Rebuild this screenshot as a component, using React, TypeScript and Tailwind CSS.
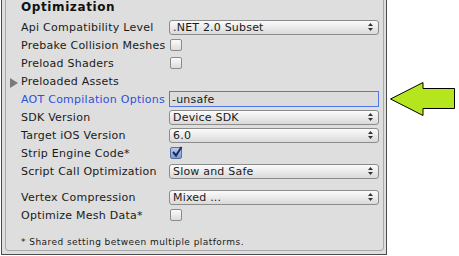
import React from "react"

type Row =
  | { kind: "popup"; label: string; value: string }
  | { kind: "check"; label: string; checked?: boolean }
  | { kind: "fold"; label: string }
  | { kind: "text"; label: string; value: string }

const rows: Row[] = [
  { kind: "popup", label: "Api Compatibility Level", value: ".NET 2.0 Subset" },
  { kind: "check", label: "Prebake Collision Meshes" },
  { kind: "check", label: "Preload Shaders" },
  { kind: "fold", label: "Preloaded Assets" },
  { kind: "text", label: "AOT Compilation Options", value: "-unsafe" },
  { kind: "popup", label: "SDK Version", value: "Device SDK" },
  { kind: "popup", label: "Target iOS Version", value: "6.0" },
  { kind: "check", label: "Strip Engine Code*", checked: true },
  { kind: "popup", label: "Script Call Optimization", value: "Slow and Safe" },
]

const rows2: Row[] = [
  { kind: "popup", label: "Vertex Compression", value: "Mixed ..." },
  { kind: "check", label: "Optimize Mesh Data*" },
]

function Popup({ value }: { value: string }) {
  return (
    <div className="flex h-[15px] w-[210px] items-center justify-between rounded-[3px] border border-[#8c8c8c] bg-gradient-to-b from-[#fbfbfb] to-[#dadada] pl-[3px] pr-[5px] text-[11px] leading-none tracking-[0.2px] text-[#1a1a1a]">
      <span>{value}</span>
      <svg width="5" height="8" viewBox="0 0 5 8">
        <path d="M2.5 0 L5 3 L0 3 Z" fill="#333" />
        <path d="M2.5 8 L5 5 L0 5 Z" fill="#333" />
      </svg>
    </div>
  )
}

function Check({ checked }: { checked?: boolean }) {
  if (checked) {
    return (
      <div className="relative h-[12px] w-[12px] rounded-[2px] border border-[#5a6f9a] bg-gradient-to-b from-[#b9ccef] to-[#7b9ad6]">
        <svg width="12" height="12" viewBox="0 0 12 12" className="absolute left-[0px] top-[-2px]">
          <path d="M2 6 L5 9.5 L10.5 1" stroke="#1d2c57" strokeWidth="2" fill="none" />
        </svg>
      </div>
    )
  }
  return (
    <div className="h-[12px] w-[12px] rounded-[2px] border border-[#8c8c8c] bg-gradient-to-b from-[#fafafa] to-[#dcdcdc]" />
  )
}

function SettingRow({ row }: { row: Row }) {
  return (
    <div className="flex h-[18px] items-center">
      <div className="relative flex w-[163px] shrink-0 items-center pl-[15px]">
        {row.kind === "fold" && (
          <svg width="8" height="10" viewBox="0 0 8 10" className="absolute left-[4px] top-[2px]">
            <path d="M0 0 L8 5 L0 10 Z" fill="#7a7a7a" />
          </svg>
        )}
        <span
          className={
            "whitespace-nowrap text-[11px] leading-none tracking-[0.25px] " +
            (row.kind === "text" ? "text-[#2e50dc]" : "text-[#1a1a1a]")
          }
        >
          {row.label}
        </span>
      </div>
      <div className="flex flex-1 items-center">
        {row.kind === "popup" && <Popup value={row.value} />}
        {row.kind === "check" && (
          <div className="pl-[1px]">
            <Check checked={row.checked} />
          </div>
        )}
        {row.kind === "text" && (
          <div className="flex h-[16px] w-[210px] items-center border border-[#4f78e6] bg-[#dcdcdc] pl-[2px] text-[11px] leading-none tracking-[0.2px] text-[#1a1a1a]">
            {row.value}
          </div>
        )}
      </div>
    </div>
  )
}

export default function App() {
  return (
    <div className="flex h-[256px] w-[459px] items-start bg-white font-['DejaVu_Sans',sans-serif]">
      <div className="ml-[1px] flex h-[255px] w-[386px] shrink-0 border-x border-b border-[#4b4b4b] bg-[#dedede] pb-[3px] pl-[3px] pr-[2px]">
        <div className="flex flex-1 flex-col rounded-b-[4px] border-x border-b border-[#a9a9a9]">
          <div className="h-[18px] pl-[15px] text-[12px] font-bold leading-[14px] tracking-[0.6px] text-[#111]">
            Optimization
          </div>
          {rows.map((r) => (
            <SettingRow key={r.label} row={r} />
          ))}
          <div className="h-[8px]" />
          {rows2.map((r) => (
            <SettingRow key={r.label} row={r} />
          ))}
          <div className="flex h-[26px] items-end pb-[3px] pl-[15px] text-[9px] leading-none tracking-[0.45px] text-[#1a1a1a]">
            * Shared setting between multiple platforms.
          </div>
        </div>
      </div>
      <div className="ml-[3px] mt-[82px]">
        <svg width="66" height="35" viewBox="0 0 66 35">
          <path
            d="M0.5 17 L33 0.5 L33 6.5 L64.5 6.5 L64.5 26.5 L33 26.5 L33 33.5 Z"
            fill="#b5e61d"
            stroke="#000"
            strokeWidth="1"
          />
        </svg>
      </div>
    </div>
  )
}
